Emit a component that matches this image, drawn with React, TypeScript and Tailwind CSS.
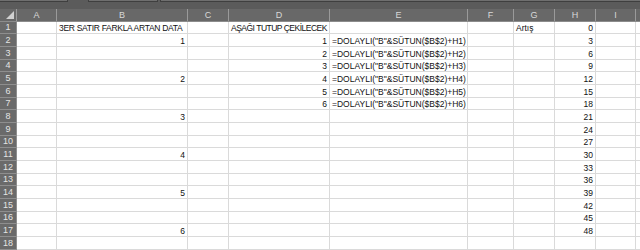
import React from "react";

const cols = [
  { key: "A", w: 40 },
  { key: "B", w: 131 },
  { key: "C", w: 41 },
  { key: "D", w: 101 },
  { key: "E", w: 138 },
  { key: "F", w: 46 },
  { key: "G", w: 41 },
  { key: "H", w: 41 },
  { key: "I", w: 40 },
  { key: "J", w: 30 },
];

const rowHeights = [12, 13, 13, 12, 13, 13, 12, 13, 13, 12, 13, 13, 12, 13, 13, 12, 13, 13];

type Cell = { t: string; a?: "l" | "r"; cls?: string };

const data: Record<string, Cell> = {
  "B1": { t: "3ER SATIR FARKLA ARTAN DATA", a: "l", cls: "tracking-[-0.3px]" },
  "D1": { t: "AŞAĞI TUTUP ÇEKİLECEK", a: "l", cls: "tracking-[-0.5px]" },
  "G1": { t: "Artış", a: "l" },
  "H1": { t: "0", a: "r" },
  "B2": { t: "1", a: "r" },
  "B5": { t: "2", a: "r" },
  "B8": { t: "3", a: "r" },
  "B11": { t: "4", a: "r" },
  "B14": { t: "5", a: "r" },
  "B17": { t: "6", a: "r" },
};
for (let i = 1; i <= 6; i++) {
  data["D" + (i + 1)] = { t: String(i), a: "r" };
  data["E" + (i + 1)] = { t: `=DOLAYLI("B"&SÜTUN($B$2)+H${i})`, a: "l" };
}
for (let i = 2; i <= 17; i++) {
  data["H" + i] = { t: String((i - 1) * 3), a: "r" };
}

export default function App() {
  return (
    <div
      className="w-[640px] h-[250px] overflow-hidden bg-white text-[8.5px] text-[#111111]"
      style={{ fontFamily: '"Liberation Sans", Arial, sans-serif' }}
    >
      {/* top strip */}
      <div className="h-[9px] bg-[#5b5b5b] flex items-start">
        <div className="h-[2px] w-[68px] bg-[#6f6f6f] border-b border-r border-[#3f3f3f]" />
        <div className="h-[2px] w-[20px]" />
        <div className="h-[2px] w-[70px] bg-[#6f6f6f] border-b border-x border-[#3f3f3f]" />
        <div className="h-[2px] w-[2px]" />
        <div className="h-[2px] flex-1 bg-[#6f6f6f] border-b border-l border-[#3f3f3f]" />
      </div>
      {/* column headers */}
      <div className="flex h-[13px] bg-[#686868] text-[#d8d8d8] text-[9px] border-b border-[#8c8c8c]">
        <div className="w-[17px] shrink-0 relative border-r border-[#9a9a9a]">
          <svg className="absolute right-[2px] bottom-[2px]" width="8" height="8" viewBox="0 0 8 8">
            <polygon points="8,0 8,8 0,8" fill="#d0d0d0" />
          </svg>
        </div>
        {cols.map((c) => (
          <div
            key={c.key}
            style={{ width: c.w }}
            className="shrink-0 flex items-center justify-center border-r border-[#9a9a9a] leading-none"
          >
            {c.key === "J" ? "" : c.key}
          </div>
        ))}
      </div>
      {rowHeights.map((h, ri) => {
        const r = ri + 1;
        return (
          <div key={r} className="flex" style={{ height: h }}>
            <div className="w-[17px] shrink-0 bg-[#6a6a6a] text-[#e4e4e4] text-[9px] flex items-center justify-center border-b border-r border-[#8e8e8e] leading-none">
              {r}
            </div>
            {cols.map((c) => {
              const cell = data[c.key + r];
              return (
                <div
                  key={c.key}
                  style={{ width: c.w }}
                  className={`shrink-0 border-b border-r border-[#dadada] flex items-end pb-[1px] px-[2px] leading-none whitespace-nowrap overflow-visible ${
                    cell?.a === "r" ? "justify-end" : "justify-start"
                  }`}
                >
                  {cell ? <span className={cell.cls ?? ""}>{cell.t}</span> : ""}
                </div>
              );
            })}
          </div>
        );
      })}
    </div>
  );
}
